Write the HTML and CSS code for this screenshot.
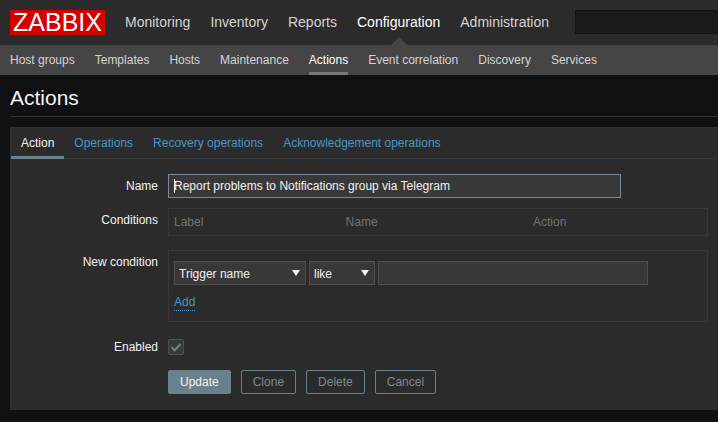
FILE: index.html
```html
<!DOCTYPE html>
<html lang="en">
<head>
<meta charset="utf-8">
<title>Configuration of actions</title>
<link rel="stylesheet" href="styles.css">
</head>
<body>
<header>
  <div class="top-bar">
    <a class="logo" href="#">ZABBIX</a>
    <nav class="top-nav">
      <a href="#">Monitoring</a>
      <a href="#">Inventory</a>
      <a href="#">Reports</a>
      <a href="#" class="selected">Configuration</a>
      <a href="#">Administration</a>
    </nav>
    <input class="search" type="text" aria-label="Search">
  </div>
  <nav class="sub-nav">
    <a href="#">Host groups</a>
    <a href="#">Templates</a>
    <a href="#">Hosts</a>
    <a href="#">Maintenance</a>
    <a href="#" class="selected">Actions</a>
    <a href="#">Event correlation</a>
    <a href="#">Discovery</a>
    <a href="#">Services</a>
  </nav>
</header>
<main>
  <h1>Actions</h1>
  <form class="panel">
    <nav class="tabs">
      <a href="#" class="selected">Action</a>
      <a href="#">Operations</a>
      <a href="#">Recovery operations</a>
      <a href="#">Acknowledgement operations</a>
    </nav>
    <div class="form-grid">
      <div class="row">
        <label class="caption" for="name">Name</label>
        <input class="field name" id="name" type="text" value="Report problems to Notifications group via Telegram">
      </div>
      <div class="row wide">
        <span class="caption" id="conditions">Conditions</span>
        <div class="box">
          <table aria-labelledby="conditions">
            <thead>
              <tr><th class="col-label">Label</th><th class="col-name">Name</th><th>Action</th></tr>
            </thead>
          </table>
        </div>
      </div>
      <div class="row wide">
        <label class="caption" for="condition">New condition</label>
        <div class="box new-condition">
          <div class="controls">
            <span class="select type"><select class="field" id="condition"><option>Trigger name</option></select></span>
            <span class="select operator"><select class="field" aria-label="Operator"><option>like</option></select></span>
            <input class="field value" type="text" aria-label="Value">
          </div>
          <a class="add" href="#">Add</a>
        </div>
      </div>
      <div class="row compact">
        <label class="caption" for="enabled">Enabled</label>
        <span class="check">
          <input id="enabled" type="checkbox" checked>
          <svg viewBox="0 0 16 16" aria-hidden="true"><path d="M3.5 8.2 6.7 11.3 12.6 5"/></svg>
        </span>
      </div>
      <div class="buttons">
        <button type="button" class="primary">Update</button>
        <button type="button">Clone</button>
        <button type="button">Delete</button>
        <button type="button">Cancel</button>
      </div>
    </div>
  </form>
</main>
</body>
</html>
```
FILE: styles.css
```css
* {
  box-sizing: border-box;
}

html {
  background: #0e1012;
}

body {
  margin: 0;
  min-height: 100vh;
  border-right: 1px solid #fff;
  overflow: hidden;
  background: #0e1012;
  color: #f2f2f2;
  font: 12px/24px "Liberation Sans", Arial, sans-serif;
}

a {
  color: #4796c4;
  text-decoration: none;
}

input,
select,
button {
  margin: 0;
  font: inherit;
  color: inherit;
}

.top-bar {
  display: flex;
  align-items: flex-start;
  height: 45px;
  padding: 10px 0 0 10px;
  background: #2b2b2b;
}

.logo {
  flex: none;
  width: 95px;
  height: 25px;
  background: #d40000;
  color: #fff;
  font-size: 25px;
  line-height: 25px;
  text-align: center;
}

.top-nav {
  display: flex;
  gap: 20px;
  margin: 0 26px 0 20px;
  font-size: 14px;
}

.top-nav a {
  position: relative;
  height: 35px;
  color: #d4d4d4;
}

.top-nav .selected,
.sub-nav .selected {
  color: #fff;
}

.top-nav .selected::after {
  content: "";
  position: absolute;
  bottom: 0;
  left: 50%;
  margin-left: -8px;
  border: 8px solid transparent;
  border-top: 0;
  border-bottom-color: #454545;
}

.search {
  flex: 1;
  min-width: 0;
  height: 24px;
  border: 1px solid #141414;
  border-right: 0;
  background: #1a1a1a;
}

.sub-nav {
  display: flex;
  gap: 20px;
  padding: 0 10px;
  background: #454545;
  line-height: 30px;
}

.sub-nav a {
  height: 30px;
  color: #d4d4d4;
}

.sub-nav .selected {
  border-bottom: 3px solid #787878;
}

main {
  padding-left: 10px;
}

h1 {
  margin: 0 0 10px;
  padding: 11px 0 6px;
  border-bottom: 1px solid #2e2f30;
  font-size: 21px;
  font-weight: normal;
  line-height: 24px;
}

.panel {
  border: 1px solid #303030;
  border-right: 0;
  background: #2b2b2b;
}

.tabs {
  display: flex;
  height: 31px;
  border-bottom: 1px solid #383838;
  line-height: 30px;
}

.tabs a {
  height: 31px;
  padding: 0 10px;
}

.tabs .selected {
  border-bottom: 3px solid #69808d;
  color: #f2f2f2;
}

.form-grid {
  padding: 15px 10px 15px 0;
}

.row {
  display: grid;
  grid-template-columns: 147px 1fr;
  column-gap: 10px;
  align-items: start;
  margin-bottom: 10px;
}

.wide {
  margin-bottom: 14px;
}

.compact {
  margin-bottom: 12px;
  line-height: 22px;
}

.caption {
  text-align: right;
}

.field {
  height: 24px;
  padding: 0 5px;
  border: 1px solid #4f4f4f;
  border-radius: 0;
  background: #383838;
}

.name {
  width: 100%;
  max-width: 453px;
  border-color: #768d99;
  background: linear-gradient(#fff, #fff) 5px 4px / 1px 14px no-repeat #383838;
}

.box {
  padding: 1px 5px;
  border: 1px solid #383838;
}

table {
  width: 100%;
  table-layout: fixed;
  border-collapse: collapse;
}

th {
  padding: 0;
  color: #737373;
  font-weight: normal;
  text-align: left;
}

.col-label {
  width: 32.5%;
}

.col-name {
  width: 35.5%;
}

.new-condition {
  padding: 10px 5px;
}

.controls {
  display: flex;
  gap: 3px;
  margin-bottom: 10px;
}

.select {
  position: relative;
}

.select::after {
  content: "";
  position: absolute;
  top: 9px;
  right: 6px;
  border: 4px solid transparent;
  border-top: 6px solid #f2f2f2;
  border-bottom: 0;
  pointer-events: none;
}

.select select {
  display: block;
  width: 100%;
  padding: 0 4px 2px;
  appearance: none;
}

.type {
  width: 132px;
}

.operator {
  width: 66px;
}

.value {
  width: 270px;
}

.add {
  display: block;
  width: fit-content;
  border-bottom: 1px dotted #4796c4;
  line-height: 15px;
}

.check {
  position: relative;
  height: 22px;
}

.check input {
  display: block;
  width: 16px;
  height: 16px;
  margin: 3px 0;
  appearance: none;
  border: 1px solid #4f4f4f;
  border-radius: 2px;
  background: #383838;
}

.check svg {
  position: absolute;
  top: 3px;
  left: 0;
  width: 16px;
  height: 16px;
  fill: none;
  stroke: #69808d;
  stroke-width: 2.2;
  pointer-events: none;
}

.buttons {
  display: flex;
  gap: 10px;
  padding-left: 157px;
}

button {
  height: 24px;
  padding: 0 11px;
  border: 1px solid #69808d;
  border-radius: 2px;
  background: none;
  color: #768d99;
  line-height: 22px;
}

.primary {
  background: #69808d;
  color: #f2f2f2;
}
```
